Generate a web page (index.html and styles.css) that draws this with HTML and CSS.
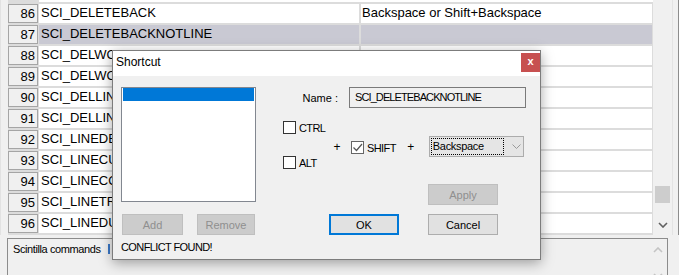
FILE: index.html
```html
<!DOCTYPE html>
<html lang="en">
  <head>
    <meta charset="UTF-8" />
    <meta name="viewport" content="width=device-width, initial-scale=1.0" />
    <title>Shortcut Mapper</title>
    <link rel="stylesheet" href="styles.css">
  </head>
  <body>
    <div class="app">
      <div class="grid-area">
        <div class="gutter"></div>
        <div class="grid">
          <div class="row-top"></div>
          <div class="row"><div class="num">86</div><div class="name">SCI_DELETEBACK</div><div class="keys">Backspace or Shift+Backspace</div></div>
          <div class="row selected"><div class="num">87</div><div class="name">SCI_DELETEBACKNOTLINE</div><div class="keys"></div></div>
          <div class="row"><div class="num">88</div><div class="name">SCI_DELWORDLEFT</div><div class="keys">Ctrl+Backspace</div></div>
          <div class="row"><div class="num">89</div><div class="name">SCI_DELWORDRIGHT</div><div class="keys"></div></div>
          <div class="row"><div class="num">90</div><div class="name">SCI_DELLINELEFT</div><div class="keys"></div></div>
          <div class="row"><div class="num">91</div><div class="name">SCI_DELLINERIGHT</div><div class="keys"></div></div>
          <div class="row"><div class="num">92</div><div class="name">SCI_LINEDELETE</div><div class="keys"></div></div>
          <div class="row"><div class="num">93</div><div class="name">SCI_LINECUT</div><div class="keys"></div></div>
          <div class="row"><div class="num">94</div><div class="name">SCI_LINECOPY</div><div class="keys"></div></div>
          <div class="row"><div class="num">95</div><div class="name">SCI_LINETRANSPOSE</div><div class="keys"></div></div>
          <div class="row"><div class="num">96</div><div class="name">SCI_LINEDUPLICATE</div><div class="keys"></div></div>
        </div>
        <div class="vscroll">
          <div class="thumb"></div>
          <div class="scroll-arrow">
            <svg width="10" height="6" viewBox="0 0 10 6"><polyline points="1,1 5,5 9,1" fill="none" stroke="#606060" stroke-width="1.6" /></svg>
          </div>
        </div>
        <div class="edge"></div>
      </div>
      <div class="panel">
        <div class="panel-text">Scintilla commands<span class="caret"></span></div>
        <div class="panel-scroll">
          <svg width="10" height="6" viewBox="0 0 10 6"><polyline points="1,5 5,1 9,5" fill="none" stroke="#c4c4c4" stroke-width="1.6" /></svg>
          <svg class="panel-down" width="10" height="6" viewBox="0 0 10 6"><polyline points="1,1 5,5 9,1" fill="none" stroke="#c4c4c4" stroke-width="1.6" /></svg>
        </div>
      </div>
    </div>

    <div class="dialog">
      <div class="dialog-title">
        <span>Shortcut</span>
        <div class="close-btn">x</div>
      </div>
      <div class="dialog-body">
        <div class="left-col">
          <div class="listbox"><div class="list-item"></div></div>
          <div class="left-btns">
            <button class="btn disabled btn-add">Add</button>
            <button class="btn disabled btn-remove">Remove</button>
          </div>
          <div class="conflict">CONFLICT FOUND!</div>
        </div>
        <div class="right-col">
          <div class="name-row">
            <span class="name-label">Name :</span>
            <div class="name-box">SCI_DELETEBACKNOTLINE</div>
          </div>
          <div class="mods">
            <div class="mod-col">
              <div class="check"><span class="box"></span>CTRL</div>
              <div class="check"><span class="box"></span>ALT</div>
            </div>
            <span class="plus">+</span>
            <div class="check shift">
              <span class="box checked">
                <svg width="11" height="11" viewBox="0 0 11 11"><polyline points="1.5,5.5 4.5,8.5 10,2" fill="none" stroke="#555" stroke-width="1.2" /></svg>
              </span>SHIFT
            </div>
            <span class="plus plus-2">+</span>
            <div class="combo">
              <span class="combo-text">Backspace</span>
              <svg class="combo-arrow" width="9" height="5" viewBox="0 0 9 5"><polyline points="0.5,0.5 4.5,4.5 8.5,0.5" fill="none" stroke="#9a9a9a" stroke-width="1" /></svg>
            </div>
          </div>
          <div class="apply-row">
            <button class="btn disabled">Apply</button>
          </div>
          <div class="action-row">
            <button class="btn btn-ok">OK</button>
            <button class="btn">Cancel</button>
          </div>
        </div>
      </div>
    </div>
  </body>
</html>
```

FILE: styles.css
```css
body {
  margin: 0;
  background-color: #f0f0f0;
  font-family: "Liberation Sans", Arial, sans-serif;
  color: #000;
  overflow: hidden;
}
.app {
  height: 275px;
  display: flex;
  flex-direction: column;
}

/* background grid */
.grid-area {
  display: flex;
  height: 235px;
}
.gutter {
  width: 7px;
  border-left: 1px solid #e2e2e2;
}
.grid {
  width: 645px;
  background-color: #dcdcdc;
  font-size: 13px;
  padding-bottom: 2px;
}
.row-top {
  height: 2px;
  margin-left: 31px;
  background-color: #fff;
}
.row {
  display: flex;
  height: 19px;
  margin-top: 2px;
  line-height: 18px;
  white-space: nowrap;
}
.num {
  width: 30px;
  box-sizing: border-box;
  border: 1px solid #a5a5a5;
  background-color: #f0f0f0;
  text-align: right;
  padding-right: 2px;
  line-height: 17px;
}
.name {
  width: 320px;
  margin-left: 1px;
  padding-left: 2px;
  box-sizing: border-box;
  background-color: #fff;
  overflow: hidden;
}
.keys {
  width: 291px;
  margin-left: 2px;
  padding-left: 1px;
  box-sizing: border-box;
  background-color: #fff;
  overflow: hidden;
}
.row.selected .name,
.row.selected .keys {
  background-color: #c9c9d3;
}
.vscroll {
  width: 19px;
  height: 233px;
  background-color: #f0f0f0;
  display: flex;
  flex-direction: column;
  justify-content: flex-end;
  align-items: center;
}
.thumb {
  width: 15px;
  height: 17px;
  background-color: #cdcdcd;
  margin-bottom: 13px;
}
.scroll-arrow {
  height: 17px;
  display: flex;
  align-items: center;
}
.edge {
  width: 5px;
  border-left: 1px solid #e3e3e3;
  border-right: 1px solid #8c8c8c;
}

/* bottom panel */
.panel {
  flex: 1;
  margin-top: 3px;
  margin-left: 7px;
  width: 661px;
  box-sizing: border-box;
  border: 1px solid #8c8c8c;
  border-bottom: none;
  display: flex;
}
.panel-text {
  flex: 1;
  padding: 4px 0 0 5px;
  font-size: 11px;
  letter-spacing: -0.4px;
  line-height: 13px;
}
.caret {
  display: inline-block;
  width: 2px;
  height: 10px;
  margin-left: 7px;
  vertical-align: -1px;
  background-color: #3a78c8;
}
.panel-scroll {
  width: 18px;
  display: flex;
  flex-direction: column;
  align-items: center;
  padding-top: 8px;
}
.panel-down {
  margin-top: 20px;
}

/* dialog window */
.dialog {
  position: absolute;
  left: 112px;
  top: 50px;
  width: 429px;
  height: 210px;
  box-sizing: border-box;
  border: 1px solid #7c7c7c;
  background-color: #f0f0f0;
  box-shadow: 0 3px 12px rgba(0, 0, 0, 0.35);
  font-size: 11px;
}
.dialog-title {
  position: relative;
  height: 25px;
  background-color: #fff;
  font-size: 12px;
  padding-left: 3px;
  line-height: 23px;
}
.close-btn {
  position: absolute;
  top: 2px;
  right: 0;
  width: 19px;
  height: 19px;
  background-color: #c75050;
  color: #fff;
  font-weight: bold;
  font-size: 11px;
  line-height: 17px;
  text-align: center;
}
.dialog-body {
  display: flex;
}
.left-col {
  width: 135px;
  margin-left: 8px;
  padding-top: 11px;
}
.listbox {
  height: 115px;
  box-sizing: border-box;
  border: 1px solid #828790;
  background-color: #fff;
  padding: 0 1px;
}
.list-item {
  height: 13px;
  background-color: #0078d7;
}
.left-btns {
  display: flex;
  margin-top: 12px;
  padding-left: 1px;
  gap: 14px;
}
.btn {
  height: 21px;
  width: 70px;
  box-sizing: border-box;
  border: 1px solid #adadad;
  background-color: #e1e1e1;
  font-family: inherit;
  font-size: 11px;
  color: #000;
  padding: 0;
}
.btn.disabled {
  background-color: #cccccc;
  border-color: #bfbfbf;
  color: #8f8f8f;
}
.btn-add {
  width: 61px;
}
.btn-remove {
  width: 58px;
}
.btn-ok {
  border: 2px solid #0078d7;
}
.conflict {
  margin-top: 6px;
  line-height: 13px;
  letter-spacing: -0.6px;
}
.right-col {
  flex: 1;
  padding-right: 14px;
}
.name-row {
  display: flex;
  justify-content: flex-end;
  align-items: center;
  gap: 11px;
  margin-top: 11px;
  height: 21px;
}
.name-box {
  width: 177px;
  height: 21px;
  box-sizing: border-box;
  border: 1px solid #7a7a7a;
  padding-left: 5px;
  line-height: 18px;
  letter-spacing: -0.9px;
  white-space: nowrap;
}
.mods {
  display: flex;
  align-items: flex-start;
  margin-top: 13px;
  padding-left: 27px;
}
.mod-col {
  width: 47px;
  display: flex;
  flex-direction: column;
  gap: 22px;
}
.check {
  display: flex;
  align-items: center;
  gap: 3px;
  height: 13px;
  letter-spacing: -0.6px;
  white-space: nowrap;
}
.box {
  width: 13px;
  height: 13px;
  box-sizing: border-box;
  border: 1px solid #333;
  background-color: #fff;
  flex: none;
}
.box.checked {
  border-color: #666;
  display: flex;
}
.plus {
  width: 14px;
  text-align: center;
  font-size: 12px;
  line-height: 13px;
  margin-top: 20px;
}
.check.shift {
  margin-left: 7px;
  margin-top: 20px;
}
.plus-2 {
  margin-left: 8px;
}
.combo {
  margin-left: 11px;
  margin-top: 15px;
  width: 95px;
  height: 21px;
  box-sizing: border-box;
  border: 1px solid #acacac;
  background-color: #e5e5e5;
  display: flex;
  align-items: center;
  padding: 1px;
}
.combo-text {
  width: 73px;
  height: 17px;
  box-sizing: border-box;
  border: 1px dotted #000;
  line-height: 15px;
  padding-left: 1px;
  letter-spacing: -0.3px;
}
.combo-arrow {
  margin-left: 8px;
}
.apply-row {
  display: flex;
  justify-content: flex-end;
  margin-top: 15px;
  padding-right: 28px;
}
.action-row {
  display: flex;
  justify-content: flex-end;
  gap: 29px;
  margin-top: 9px;
  padding-right: 28px;
}
```
